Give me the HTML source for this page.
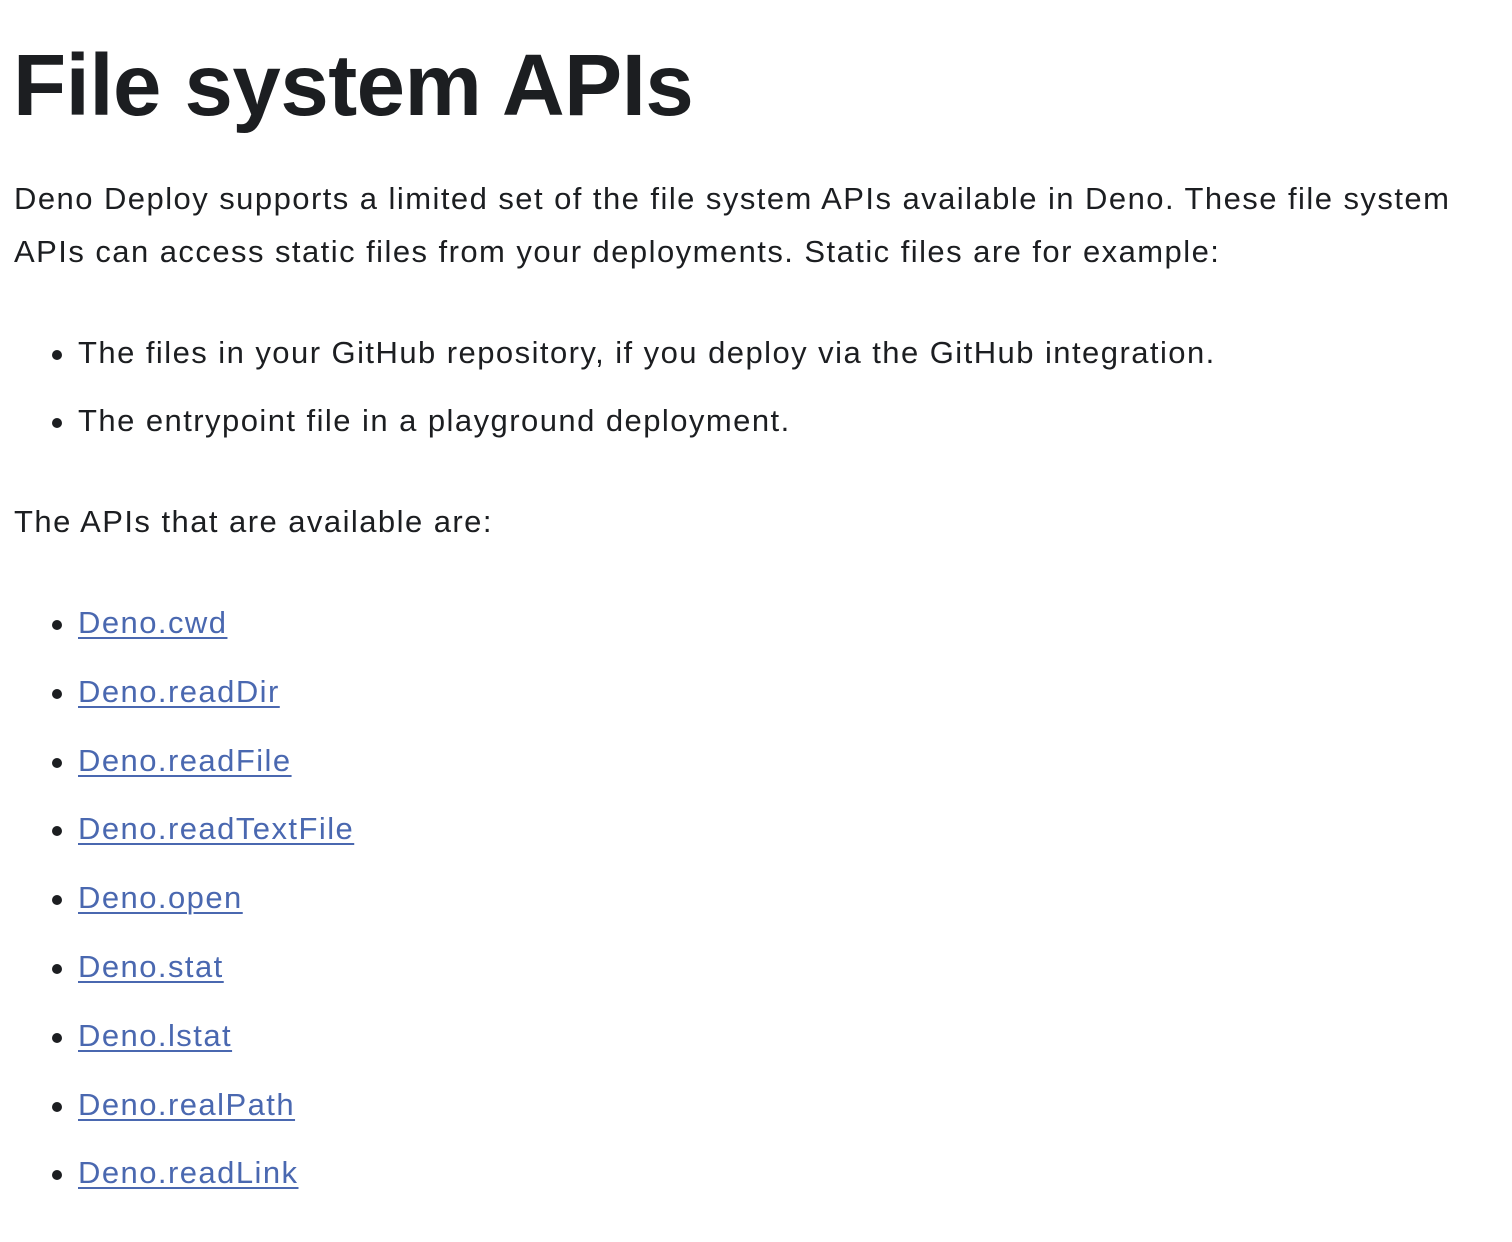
<!DOCTYPE html>
<html><head><meta charset="utf-8"><style>
html,body{margin:0;padding:0;background:#fff;width:1512px;height:1242px;overflow:hidden}
body{font-family:"Liberation Sans",sans-serif;color:#1c1e21;position:relative}
.l{position:absolute;left:14px;font-size:31px;line-height:54px;height:54px;white-space:nowrap;letter-spacing:1.45px}
.b{left:78px}
.b::before{content:"";position:absolute;left:-26px;top:24px;width:10px;height:10px;border-radius:50%;background:#1c1e21}
a{color:#4a68b0;text-decoration:underline;text-decoration-thickness:2px;text-underline-offset:4px}
h1{position:absolute;left:13px;top:31px;margin:0;font-size:87px;line-height:110px;font-weight:bold;letter-spacing:-0.5px;color:#1c1e21}
</style></head><body>
<h1>File system APIs</h1>
<div class="l" style="top:172px">Deno Deploy supports a limited set of the file system APIs available in Deno. These file system</div>
<div class="l" style="top:225px">APIs can access static files from your deployments. Static files are for example:</div>
<div class="l b" style="top:326px">The files in your GitHub repository, if you deploy via the GitHub integration.</div>
<div class="l b" style="top:394px">The entrypoint file in a playground deployment.</div>
<div class="l" style="top:495px">The APIs that are available are:</div>
<div class="l b" style="top:596px"><a>Deno.cwd</a></div>
<div class="l b" style="top:665px"><a>Deno.readDir</a></div>
<div class="l b" style="top:734px"><a>Deno.readFile</a></div>
<div class="l b" style="top:802px"><a>Deno.readTextFile</a></div>
<div class="l b" style="top:871px"><a>Deno.open</a></div>
<div class="l b" style="top:940px"><a>Deno.stat</a></div>
<div class="l b" style="top:1009px"><a>Deno.lstat</a></div>
<div class="l b" style="top:1078px"><a>Deno.realPath</a></div>
<div class="l b" style="top:1146px"><a>Deno.readLink</a></div>
</body></html>
